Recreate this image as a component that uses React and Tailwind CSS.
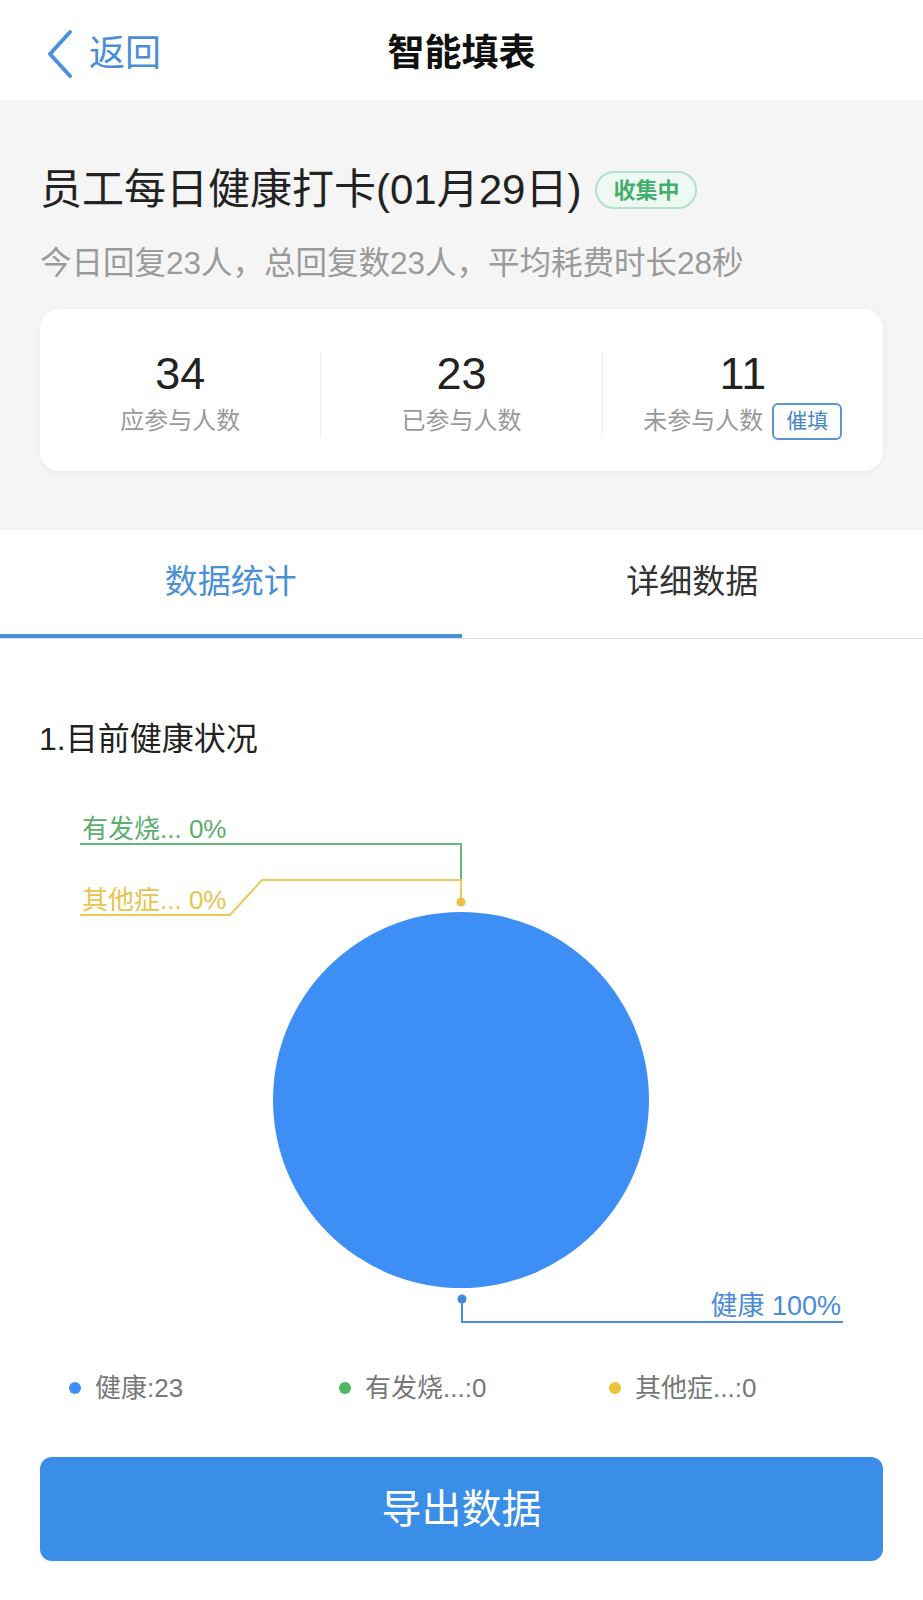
import React from "react";

const font = "font-['Liberation_Sans','Noto_Sans_CJK_SC',sans-serif]";

const Stat = ({ value, label, children }) => (
	<div className="flex-1 flex flex-col items-center">
		<p className="text-[45px] leading-[50px] text-[#222]">{value}</p>
		<div className="mt-[4px] flex items-center gap-[9px] h-[36px]">
			<p className="text-[24px] leading-[32px] text-[#999]">{label}</p>
			{children}
		</div>
	</div>
);

const PieChart = () => (
	<svg width="923" height="560" viewBox="0 0 923 560" className="block">
		{/* 有发烧 */}
		<text x="82" y="59" fontSize="26" fill="#5cae6d" fontFamily="Liberation Sans, Noto Sans CJK SC, sans-serif">
			有发烧... 0%
		</text>
		<polyline points="80,65 461,65 461,101" fill="none" stroke="#67b878" strokeWidth="2" />
		{/* 其他症 */}
		<text x="82" y="130" fontSize="26" fill="#e8c44e" fontFamily="Liberation Sans, Noto Sans CJK SC, sans-serif">
			其他症... 0%
		</text>
		<polyline points="80,136 230,136 262,101 461,101 461,123" fill="none" stroke="#ecc95a" strokeWidth="2" />
		<circle cx="461" cy="123" r="4.5" fill="#ebc244" />
		{/* pie */}
		<circle cx="461" cy="321" r="188" fill="#3e8ff5" />
		{/* 健康 */}
		<circle cx="462" cy="520" r="4.5" fill="#3f88dc" />
		<polyline points="462,520 462,543 843,543" fill="none" stroke="#4a90d8" strokeWidth="2" />
		<text x="841" y="536" fontSize="27" fill="#4a8cd6" textAnchor="end" fontFamily="Liberation Sans, Noto Sans CJK SC, sans-serif">
			健康 100%
		</text>
	</svg>
);

const LegendItem = ({ color, label }) => (
	<div className="w-[270px] flex items-center gap-[14px]">
		<span className={`w-[12px] h-[12px] rounded-full ${color}`} />
		<span className="text-[26px] leading-[32px] text-[#777]">{label}</span>
	</div>
);

const App = () => {
	return (
		<div className={`w-[923px] min-h-[1600px] bg-white ${font}`}>
			{/* header */}
			<div className="h-[100px] pt-[8px] grid grid-cols-3 items-center bg-white">
				<div className="flex items-center pl-[45px] gap-[14px]">
					<svg width="30" height="50" viewBox="0 0 30 50">
						<polyline points="25,3 5,25 25,47" fill="none" stroke="#4a8fe0" strokeWidth="4" strokeLinecap="round" strokeLinejoin="round" />
					</svg>
					<span className="text-[36px] leading-[44px] text-[#4b8ed8]">返回</span>
				</div>
				<p className="text-center text-[37px] leading-[44px] font-bold text-[#111]">智能填表</p>
				<div />
			</div>

			{/* summary */}
			<div className="bg-[#f5f5f5] px-[40px] pt-[66px] pb-[59px]">
				<div className="flex items-center gap-[14px]">
					<h1 className="text-[42px] leading-[48px] text-[#222]">员工每日健康打卡(01月29日)</h1>
					<span className="h-[38px] px-[16px] flex items-center rounded-full border-2 border-[#b3e1c6] bg-[#eff9f3] text-[22px] font-bold text-[#43ad6b]">
						收集中
					</span>
				</div>
				<p className="mt-[29px] text-[31.5px] leading-[40px] text-[#9a9a9a]">今日回复23人，总回复数23人，平均耗费时长28秒</p>
				<div className="mt-[26px] h-[162px] pt-[8px] bg-white rounded-[20px] shadow-[0_2px_10px_rgba(0,0,0,0.04)] flex items-center">
					<Stat value="34" label="应参与人数" />
					<div className="w-px h-[86px] bg-[#ececec]" />
					<Stat value="23" label="已参与人数" />
					<div className="w-px h-[86px] bg-[#ececec]" />
					<Stat value="11" label="未参与人数">
						<span className="h-[37px] px-[12px] flex items-center rounded-[6px] border-2 border-[#5b95d2] text-[21px] text-[#4a86c8]">
							催填
						</span>
					</Stat>
				</div>
			</div>

			{/* tabs */}
			<div className="flex border-b border-[#dedede]">
				<div className="flex-1 h-[108px] flex items-center justify-center border-b-[4px] border-[#4a8fd8] text-[33px] text-[#4a90d6]">
					数据统计
				</div>
				<div className="flex-1 h-[108px] flex items-center justify-center border-b-[4px] border-transparent text-[33px] text-[#333]">
					详细数据
				</div>
			</div>

			{/* chart */}
			<p className="mt-[80px] pl-[39px] text-[32px] leading-[40px] text-[#222]">1.目前健康状况</p>
			<div className="mt-[20px]">
				<PieChart />
			</div>
			<div className="mt-[33px] flex pl-[69px]">
				<LegendItem color="bg-[#3e8ff5]" label="健康:23" />
				<LegendItem color="bg-[#4cb95e]" label="有发烧...:0" />
				<LegendItem color="bg-[#ebc337]" label="其他症...:0" />
			</div>

			<div className="px-[40px] mt-[53px] pb-[38px]">
				<button className="w-full h-[104px] rounded-[12px] bg-[#3a8ee8] text-white text-[40px]">导出数据</button>
			</div>
		</div>
	);
};

export default App;
